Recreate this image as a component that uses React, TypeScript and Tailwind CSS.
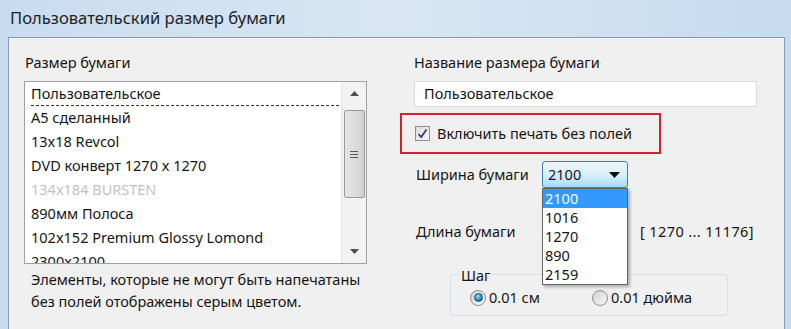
import React from "react"

const font = { fontFamily: '"Noto Sans", "Open Sans", sans-serif' }

const sizes = [
  { name: "Пользовательское", gray: false },
  { name: "A5 сделанный", gray: false },
  { name: "13x18 Revcol", gray: false },
  { name: "DVD конверт 1270 x 1270", gray: false },
  { name: "134x184 BURSTEN", gray: true },
  { name: "890мм Полоса", gray: false },
  { name: "102x152 Premium Glossy Lomond", gray: false },
  { name: "2300x2100", gray: false },
]

const widths = ["2100", "1016", "1270", "890", "2159"]

function Checkbox() {
  return (
    <span className="flex h-[15px] w-[15px] items-center justify-center border border-[#8f8f8f] bg-gradient-to-br from-[#dcdcdc] to-[#f8f8f8]">
      <svg width="11" height="11" viewBox="0 0 11 11">
        <path d="M1.5 6 L4.2 9 L9.5 1.5" fill="none" stroke="#2c3f77" strokeWidth="1.8" />
      </svg>
    </span>
  )
}

function Radio({ on }: { on: boolean }) {
  return (
    <span className="flex h-[16px] w-[16px] items-center justify-center rounded-full border border-[#8e8f8f] bg-gradient-to-br from-[#d0d0d0] to-[#fafafa]">
      {on && (
        <span className="h-[9px] w-[9px] rounded-full border border-[#1c5180] bg-[radial-gradient(circle_at_40%_35%,#9fe2ff,#1d8fc9_55%,#0b4f7a)]" />
      )}
    </span>
  )
}

export default function App() {
  return (
    <div
      className="relative flex h-[329px] w-[791px] flex-col overflow-hidden bg-gradient-to-r from-[#c9dcef] via-[#d8e6f4] to-[#c6dbef] text-[14.5px] text-[#151515]"
      style={font}
    >
      {/* title bar */}
      <div className="flex h-[37px] shrink-0 items-center pl-[10px] text-[16.6px] text-[#1e1e1e]">
        Пользовательский размер бумаги
      </div>

      {/* client area */}
      <div className="ml-[8px] mr-[6px] flex flex-1 border-l border-t border-r border-[#8d9cab] bg-[#f0f0f0]">
        {/* left column */}
        <div className="flex w-[391px] flex-col pl-[15px] pt-[14px]">
          <div className="h-[20px] pl-[1px] leading-[20px]">Размер бумаги</div>
          <div className="mt-[9px] flex h-[183px] w-[343px] overflow-hidden border border-[#a0a0a0] bg-white">
            <div className="flex-1 pl-[6px]">
              {sizes.map((s, i) => (
                <div
                  key={s.name}
                  className={`h-[24px] leading-[23px] ${s.gray ? "text-[#c3c3c3]" : ""} ${
                    i === 0 ? "mr-[2px] border-b border-dashed border-[#333]" : ""
                  }`}
                >
                  {s.name}
                </div>
              ))}
            </div>
            <div className="flex w-[25px] flex-col items-center border-l border-[#e8e8e8] bg-[#f2f2f2]">
              <div className="flex h-[22px] items-center">
                <svg width="9" height="5" viewBox="0 0 9 5">
                  <path d="M0 5 L4.5 0 L9 5 Z" fill="#4d4d4d" />
                </svg>
              </div>
              <div className="mt-[6px] flex h-[88px] w-[21px] items-center justify-center rounded-[2px] border border-[#9b9b9b] bg-gradient-to-r from-[#e6e6e6] via-[#dcdcdc] to-[#d0d0d0]">
                <div className="flex flex-col gap-[2px]">
                  <span className="h-px w-[8px] bg-[#555]" />
                  <span className="h-px w-[8px] bg-[#555]" />
                  <span className="h-px w-[8px] bg-[#555]" />
                </div>
              </div>
              <div className="flex-1" />
              <div className="flex h-[24px] items-center">
                <svg width="9" height="5" viewBox="0 0 9 5">
                  <path d="M0 0 L4.5 5 L9 0 Z" fill="#4d4d4d" />
                </svg>
              </div>
            </div>
          </div>
          <div className="mt-[4px] pl-[7px] leading-[22px]">
            Элементы, которые не могут быть напечатаны
            <br />
            без полей отображены серым цветом.
          </div>
        </div>

        {/* right column */}
        <div className="flex flex-1 flex-col pt-[14px]">
          <div className="h-[20px] pl-[14px] leading-[20px]">Название размера бумаги</div>
          <div className="ml-[14px] mt-[9px] flex h-[26px] w-[343px] items-center border border-[#dcdcdc] bg-white pl-[9px]">
            Пользовательское
          </div>
          <div className="mt-[6px] flex h-[41px] w-[261px] items-center gap-[7px] border-2 border-[#d3222c] pl-[13px]">
            <Checkbox />
            <span>Включить печать без полей</span>
          </div>
          <div className="mt-[7px] flex items-center pl-[16px]">
            <span className="w-[126px]">Ширина бумаги</span>
            <div className="flex h-[27px] w-[86px] items-center justify-between rounded-[3px] border border-[#3c7fb1] bg-gradient-to-b from-[#eaf6fd] via-[#d9f0fc] to-[#a7d9f5] pl-[5px] pr-[7px]">
              <span>2100</span>
              <svg width="11" height="6" viewBox="0 0 11 6">
                <path d="M0 0 L5.5 6 L11 0 Z" fill="#111" />
              </svg>
            </div>
          </div>
          <div className="mt-[33px] flex items-center pl-[16px]">
            <span className="w-[224px]">Длина бумаги</span>
            <span className="tracking-[0.4px]">[ 1270 ... 11176]</span>
          </div>
          <div className="relative ml-[50px] mt-[31px] h-[42px] w-[278px] rounded-[3px] border border-[#d5dfe5]">
            <span className="absolute left-[8px] top-[-10px] bg-[#f0f0f0] px-[2px] leading-[20px]">Шаг</span>
            <div className="flex items-center pt-[12px]">
              <div className="ml-[19px] flex w-[122px] items-center gap-[3px]">
                <Radio on />
                <span>0.01 см</span>
              </div>
              <div className="flex items-center gap-[3px]">
                <Radio on={false} />
                <span>0.01 дюйма</span>
              </div>
            </div>
          </div>
        </div>
      </div>

      {/* open dropdown */}
      <div className="absolute left-[542px] top-[188px] w-[86px] border border-[#646464] bg-white shadow-[2px_2px_3px_rgba(0,0,0,0.3)]">
        {widths.map((w, i) => (
          <div
            key={w}
            className={`h-[19px] pl-[2px] leading-[19px] ${i === 0 ? "bg-[#3399ff] text-white" : ""}`}
          >
            {w}
          </div>
        ))}
      </div>
    </div>
  )
}
